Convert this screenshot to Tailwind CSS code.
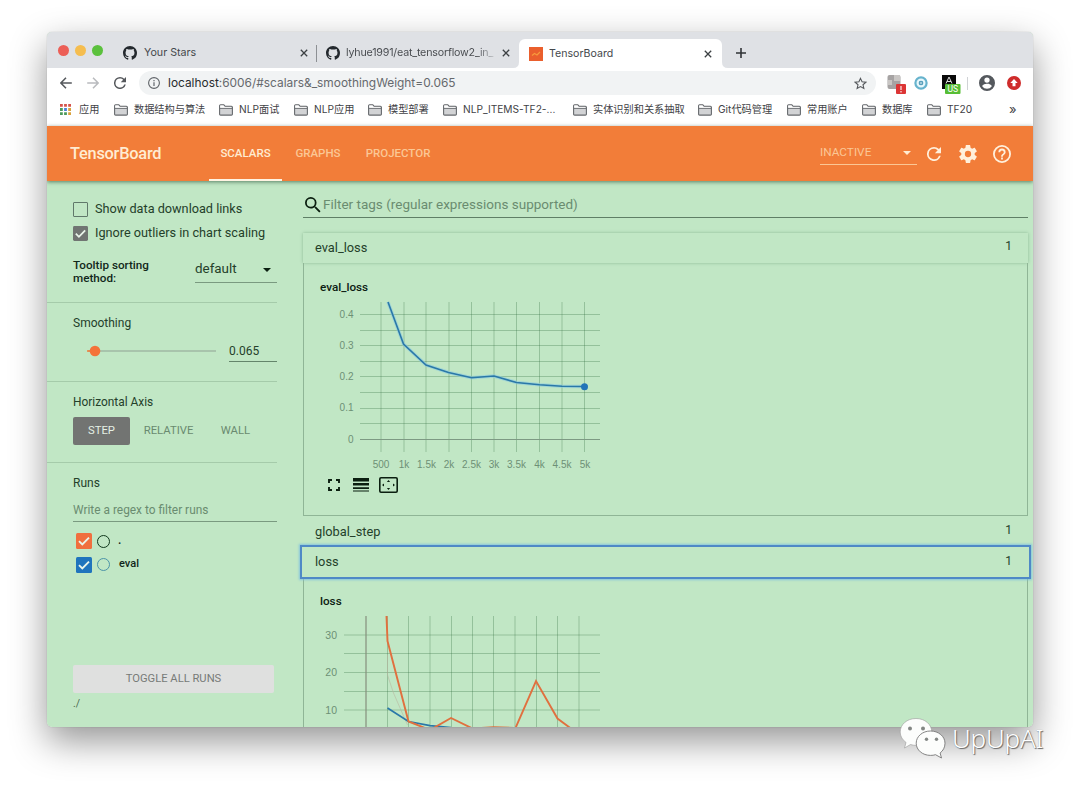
<!DOCTYPE html>
<html lang="zh">
<head>
    <meta charset="UTF-8">
    <meta name="viewport" content="width=device-width, initial-scale=1.0">
    <title>TensorBoard</title>
    <script src="https://cdn.jsdelivr.net/npm/@tailwindcss/browser@4"></script>
</head>
<body class="relative h-[790px] w-[1080px] overflow-hidden bg-white font-['Roboto','Noto_Sans_CJK_SC',sans-serif] text-[#24402a]">
    <!-- Shared icons -->
    <svg class="hidden">
        <symbol id="folder" viewBox="0 0 14 12">
            <path d="M.6 10.2V1.8q0-1 1-1h3.2l1.4 1.5h6.2q1 0 1 1v6.9q0 .9-1 .9H1.6q-1 0-1-.9z" fill="#d2d3d5" stroke="#65686c" stroke-width="1.1"/>
            <path d="M.8 4.3h12.4" stroke="#65686c" stroke-width="1"/>
            <path d="M1.2 1.5h3.3l1.2 1.5h6.8v.8H1.2z" fill="#fff"/>
        </symbol>
        <symbol id="github" viewBox="0 0 16 16">
            <path fill="#24292e" d="M8 0C3.58 0 0 3.58 0 8c0 3.54 2.29 6.53 5.47 7.59.4.07.55-.17.55-.38 0-.19-.01-.82-.01-1.49-2.01.37-2.53-.49-2.69-.94-.09-.23-.48-.94-.82-1.13-.28-.15-.68-.52-.01-.53.63-.01 1.08.58 1.23.82.72 1.21 1.87.87 2.33.66.07-.52.28-.87.51-1.07-1.78-.2-3.64-.89-3.64-3.95 0-.87.31-1.59.82-2.15-.08-.2-.36-1.02.08-2.12 0 0 .67-.21 2.2.82.64-.18 1.32-.27 2-.27s1.36.09 2 .27c1.53-1.04 2.2-.82 2.2-.82.44 1.1.16 1.92.08 2.12.51.56.82 1.27.82 2.15 0 3.07-1.87 3.75-3.65 3.95.29.25.54.73.54 1.48 0 1.07-.01 1.93-.01 2.2 0 .21.15.46.55.38A8.01 8.01 0 0 0 16 8c0-4.42-3.58-8-8-8z"/>
        </symbol>
        <symbol id="close" viewBox="0 0 8 8">
            <path d="M.8.8l6.4 6.4M7.2.8L.8 7.2" stroke="#3c4043" stroke-width="1.3" fill="none"/>
        </symbol>
        <symbol id="refresh" viewBox="4 4 16 16">
            <path d="M17.65 6.35A7.96 7.96 0 0 0 12 4a8 8 0 1 0 7.73 10h-2.08A6 6 0 1 1 12 6c1.66 0 3.14.69 4.22 1.78L13 11h7V4l-2.35 2.35z"/>
        </symbol>
        <symbol id="checked" viewBox="0 0 16 16">
            <rect width="16" height="16" rx="1.5"/>
            <path d="M3 8.2l3.3 3.3L13 4.6" fill="none" stroke="#e9f5ea" stroke-width="1.9"/>
        </symbol>
    </svg>

    <!-- Browser window -->
    <div class="mt-8 ml-[47px] flex h-[695px] w-[986px] flex-col rounded-[5px] shadow-[0_0_1px_rgba(0,0,0,0.35),0_14px_36px_rgba(0,0,0,0.42)]">
    <div class="flex min-h-0 flex-1 flex-col overflow-hidden rounded-[5px] bg-[#c1e7c5]">

        <!-- Tab strip -->
        <div class="flex h-9 shrink-0 items-end bg-[#dfe1e5] font-['Inter',sans-serif] text-[11px] text-[#45484c]">
            <div class="flex h-9 w-[76px] items-center gap-[6px] pl-[11px]">
                <span class="size-[11px] rounded-full bg-[#ec5f57]"></span>
                <span class="size-[11px] rounded-full bg-[#f5bd4f]"></span>
                <span class="size-[11px] rounded-full bg-[#5bc13d]"></span>
            </div>
            <div class="flex h-[30px] w-[193px] items-center">
                <svg class="size-[14px] shrink-0"><use href="#github"/></svg>
                <span class="ml-[7px] flex-1 text-[10.700px] whitespace-nowrap">Your Stars</span>
                <svg class="mr-[8px] size-2 shrink-0"><use href="#close"/></svg>
            </div>
            <div class="flex h-[30px] w-[203px] items-center">
                <span class="h-[17px] w-px bg-[#8d9094]"></span>
                <svg class="ml-[9px] size-[14px] shrink-0"><use href="#github"/></svg>
                <span class="ml-[6px] w-[148px] bg-linear-to-r from-[#45484c] from-88% to-[#45484c]/20 bg-clip-text text-[10.700px] tracking-[-0.200px] whitespace-nowrap text-transparent">lyhue1991/eat_tensorflow2_in_</span>
                <svg class="ml-[8px] size-2 shrink-0"><use href="#close"/></svg>
            </div>
            <div class="relative flex h-[29px] w-[203px] items-center rounded-t-[6px] bg-white pl-[10px]">
                <svg class="absolute bottom-0 -left-[6px] size-[6px]" viewBox="0 0 6 6"><path d="M6 0v6H0q6 0 6-6" fill="#fff"/></svg>
                <svg class="absolute -right-[6px] bottom-0 size-[6px]" viewBox="0 0 6 6"><path d="M0 0v6h6q-6 0-6-6" fill="#fff"/></svg>
                <svg class="size-[14px]" viewBox="0 0 14 14"><rect width="14" height="14" fill="#ea5f2d"/><path d="M3 8.500l2.500-2 2.500 1.500 3-3" stroke="#f89a3c" stroke-width="1.200" fill="none"/></svg>
                <span class="ml-[6px] flex-1 text-[10.600px]">TensorBoard</span>
                <svg class="mr-[10px] size-2"><use href="#close"/></svg>
            </div>
            <div class="flex h-[30px] items-center pl-[14px]">
                <svg class="size-[10px]" viewBox="0 0 10 10"><path d="M5 0v10M0 5h10" stroke="#303336" stroke-width="1.6"/></svg>
            </div>
        </div>

        <!-- Address bar -->
        <div class="flex h-[30px] shrink-0 items-center bg-white">
            <svg class="ml-[13px] size-3" viewBox="0 0 12 12" fill="none" stroke="#55585c" stroke-width="1.5"><path d="M11.8 6H1M6 .8L.9 6 6 11.2"/></svg>
            <svg class="ml-[15px] size-3" viewBox="0 0 12 12" fill="none" stroke="#b9bbbe" stroke-width="1.5"><path d="M.2 6H11M6 .8L11.1 6 6 11.2"/></svg>
            <svg class="ml-[15px] size-3 fill-[#55585c]"><use href="#refresh"/></svg>
            <div class="ml-[13px] flex h-6 w-[737px] items-center rounded-full bg-[#f1f3f4] font-['Inter',sans-serif] text-[11.900px] text-[#66696d]">
                <svg class="ml-[9px] size-3" viewBox="0 0 12 12" fill="none" stroke="#5f6368"><circle cx="6" cy="6" r="5.4" stroke-width="1.1"/><path d="M6 5.2v3.7M6 3v1.3" stroke-width="1.2"/></svg>
                <span class="ml-[8px] flex-1 whitespace-nowrap"><span class="text-[#292b2e]">localhost</span>:6006/#scalars&amp;_smoothingWeight=0.065</span>
                <svg class="mr-[9px] size-[13px]" viewBox="0 0 24 24" fill="none" stroke="#55585c" stroke-width="2"><path d="M12 2.5l2.9 6.4 7 .7-5.3 4.7 1.6 6.9L12 17.6l-6.2 3.6 1.6-6.9L2.1 9.6l7-.7z"/></svg>
            </div>
            <svg class="mt-[3px] ml-[11px] h-[19px] w-[20px]" viewBox="0 0 20 19">
                <rect x=".5" width="13" height="14" rx="2" fill="#a6a3a3"/><path d="M1 5h4v5H1zM7 0h6v6H7z" fill="#c9c6c4"/>
                <rect x="9" y="9" width="10" height="10" rx="1" fill="#dc3535"/><path d="M14 11v4M14 16v1.4" stroke="#fff" stroke-width="1.1"/>
            </svg>
            <svg class="ml-[7px] size-[14px]" viewBox="0 0 14 14"><circle cx="7" cy="7" r="5.6" fill="#e8f7fb" stroke="#67b3cd" stroke-width="2.2"/><circle cx="7" cy="7" r="2.3" fill="#3c8fb0"/><path d="M5.5 7h3M7 5.5v3" stroke="#fff" stroke-width=".6"/></svg>
            <svg class="mt-[3px] ml-[13px] h-[19px] w-[20px]" viewBox="0 0 20 19">
                <rect x="1" width="14" height="14" fill="#090909"/><path d="M5 8.5L8 2l3 6.500M6 6.500h4" stroke="#ddd" stroke-width="1" fill="none"/>
                <rect x="4" y="9" width="15.500" height="10" rx="1" fill="#57bd35"/><text x="11.700" y="17" font-size="8.500" text-anchor="middle" fill="#fff">US</text>
            </svg>
            <span class="ml-[6px] h-[13px] w-px bg-[#d0d2d5]"></span>
            <svg class="ml-[11px] size-4" viewBox="2 2 20 20" fill="#54585d"><path d="M12 2a10 10 0 1 0 0 20 10 10 0 0 0 0-20zm0 3a3.300 3.300 0 1 1 0 6.600A3.300 3.300 0 0 1 12 5zm0 14.200a7.200 7.200 0 0 1-6-3.220c.03-1.990 4-3.080 6-3.080s5.970 1.090 6 3.080a7.200 7.200 0 0 1-6 3.220z"/></svg>
            <svg class="ml-[12px] size-[14px]" viewBox="0 0 14 14"><circle cx="7" cy="7" r="7" fill="#cf2c2b"/><path d="M7 3L3.300 7h2.200v3.300h3V7h2.200z" fill="#fff"/></svg>
        </div>

        <!-- Bookmarks bar -->
        <div class="flex h-[28px] shrink-0 items-center bg-white pb-[4px] pl-[13px] font-['Inter','Noto_Sans_CJK_SC',sans-serif] text-[10.200px] whitespace-nowrap text-[#3f4246]">
            <div class="flex w-[54px] items-center">
                <svg class="mr-[8px] size-[11px]" viewBox="0 0 11 11">
                    <path d="M0 0h2.800v2.800H0zM4.100 0h2.800v2.800H4.100zM8.200 0H11v2.800H8.200z" fill="#d5544b"/>
                    <path d="M0 4.100h2.800v2.800H0z" fill="#4d9a5b"/><path d="M4.100 4.100h2.800v2.800H4.100z" fill="#4b83d6"/><path d="M8.200 4.100H11v2.800H8.200z" fill="#d8a13b"/>
                    <path d="M0 8.200h2.800V11H0zM4.100 8.200h2.800V11H4.100z" fill="#4d9a5b"/><path d="M8.200 8.200H11V11H8.200z" fill="#d8a13b"/>
                </svg>应用</div>
            <div class="flex w-[105px] items-center gap-[6px]"><svg class="h-3 w-[14px]"><use href="#folder"/></svg>数据结构与算法</div>
            <div class="flex w-[75px] items-center gap-[6px]"><svg class="h-3 w-[14px]"><use href="#folder"/></svg>NLP面试</div>
            <div class="flex w-[74px] items-center gap-[6px]"><svg class="h-3 w-[14px]"><use href="#folder"/></svg>NLP应用</div>
            <div class="flex w-[75px] items-center gap-[6px]"><svg class="h-3 w-[14px]"><use href="#folder"/></svg>模型部署</div>
            <div class="flex w-[130px] items-center gap-[6px]"><svg class="h-3 w-[14px]"><use href="#folder"/></svg>NLP_ITEMS-TF2-...</div>
            <div class="flex w-[125px] items-center gap-[6px]"><svg class="h-3 w-[14px]"><use href="#folder"/></svg>实体识别和关系抽取</div>
            <div class="flex w-[89px] items-center gap-[6px]"><svg class="h-3 w-[14px]"><use href="#folder"/></svg>Git代码管理</div>
            <div class="flex w-[75px] items-center gap-[6px]"><svg class="h-3 w-[14px]"><use href="#folder"/></svg>常用账户</div>
            <div class="flex w-[65px] items-center gap-[6px]"><svg class="h-3 w-[14px]"><use href="#folder"/></svg>数据库</div>
            <div class="flex w-[82px] items-center gap-[6px]"><svg class="h-3 w-[14px]"><use href="#folder"/></svg>TF20</div>
            <span class="text-[13px]">»</span>
        </div>

        <!-- TensorBoard header -->
        <header class="relative flex h-[55px] shrink-0 items-center bg-[#f27d39] text-[#ffecd2] shadow-[0_1px_4px_rgba(0,40,20,0.55)]">
            <h1 class="w-[162px] pt-[1px] pl-[23px] text-[16.400px] font-medium tracking-[-0.250px]">TensorBoard</h1>
            <nav class="flex h-full flex-1 text-[11.500px] font-medium">
                <a class="flex w-[73px] items-center justify-center border-b-2 border-[#fff3e2] pt-[3px]">SCALARS</a>
                <a class="flex w-[72px] items-center justify-center pt-[1px] text-[#fbc795]">GRAPHS</a>
                <a class="flex w-[88px] items-center justify-center pt-[1px] text-[#fbc795]">PROJECTOR</a>
            </nav>
            <div class="mr-[10px] flex h-[23px] w-[97px] items-center justify-between border-b border-[#fbc795] pr-[6px] text-[11.800px] text-[#fbc795]">
                INACTIVE
                <span class="border-x-4 border-t-4 border-x-transparent border-t-[#ffecd2]"></span>
            </div>
            <svg class="size-[14px] fill-[#fff0dc]"><use href="#refresh"/></svg>
            <svg class="ml-[18px] size-[18px]" viewBox="2 2 20 20" fill="#fff0dc"><path d="M19.430 12.980c.04-.32.07-.64.07-.98s-.03-.66-.07-.98l2.110-1.650c.19-.15.24-.42.12-.64l-2-3.460c-.12-.22-.39-.3-.61-.22l-2.490 1c-.52-.4-1.080-.73-1.690-.98l-.38-2.650A.488.488 0 0 0 14 2h-4c-.25 0-.46.18-.49.42l-.38 2.650c-.61.25-1.170.59-1.690.98l-2.490-1c-.23-.09-.49 0-.61.22l-2 3.460c-.13.22-.07.49.12.64l2.110 1.650c-.04.32-.07.65-.07.98s.03.66.07.98l-2.110 1.650c-.19.15-.24.42-.12.64l2 3.460c.12.22.39.3.61.22l2.490-1c.52.4 1.080.73 1.690.98l.38 2.650c.03.24.24.42.49.42h4c.25 0 .46-.18.49-.42l.38-2.650c.61-.25 1.170-.59 1.690-.98l2.490 1c.23.09.49 0 .61-.22l2-3.460c.12-.22.07-.49-.12-.64l-2.110-1.650zM12 15.500a3.500 3.500 0 1 1 0-7 3.500 3.500 0 0 1 0 7z"/></svg>
            <svg class="mr-[22px] ml-[16px] size-[18px]" viewBox="2 2 20 20" fill="#fff0dc"><path d="M11 18h2v-2h-2v2zm1-16a10 10 0 1 0 0 20 10 10 0 0 0 0-20zm0 18a8 8 0 1 1 0-16 8 8 0 0 1 0 16zm0-14a4 4 0 0 0-4 4h2a2 2 0 1 1 4 0c0 2-3 1.750-3 5h2c0-2.250 3-2.500 3-5a4 4 0 0 0-4-4z"/></svg>
        </header>

        <div class="flex min-h-0 flex-1">
            <!-- Sidebar -->
            <aside class="flex w-[230px] shrink-0 flex-col text-[12px]">
                <section class="h-[122px] border-b border-[#a5cbaa] pt-[16px] pl-[26px] text-[12.700px]">
                    <label class="flex h-6 items-center gap-[7px]"><span class="size-[15px] rounded-[1px] border-[1.500px] border-[#60786a]"></span>Show data download links</label>
                    <label class="flex h-6 items-center gap-[7px]"><svg class="size-[15px] fill-[#707572]"><use href="#checked"/></svg>Ignore outliers in chart scaling</label>
                    <div class="mt-[12px] flex justify-between">
                        <span class="w-[110px] pt-[2px] text-[11.700px] leading-[13px] font-medium text-[#11281a]">Tooltip sorting method:</span>
                        <div class="flex h-[26px] w-[82px] items-center justify-between border-b border-[#7a9a80] pr-[6px] text-[13.400px]">default
                            <span class="border-x-[4.500px] border-t-[4.500px] border-x-transparent border-t-[#0c2012]"></span>
                        </div>
                    </div>
                </section>
                <section class="h-[79px] border-b border-[#a5cbaa] pt-[11px] pl-[26px]">
                    <h3 class="leading-[18px]">Smoothing</h3>
                    <div class="mt-[7px] flex items-center justify-between pl-[13px]">
                        <svg class="h-3 w-[131px]" viewBox="0 0 131 12"><path d="M2 6h128" stroke="#9fb9a3" stroke-width="1.500"/><path d="M1 6h8" stroke="#f27d39" stroke-width="1.500"/><circle cx="9" cy="6" r="5.300" fill="#f4733a"/></svg>
                        <div class="flex h-[23px] w-[48px] items-center border-b border-[#64856b] pt-[1px]">0.065</div>
                    </div>
                </section>
                <section class="h-[81px] border-b border-[#a5cbaa] pt-[11px] pl-[26px]">
                    <h3 class="text-[11.900px] leading-[18px]">Horizontal Axis</h3>
                    <div class="mt-[6px] flex h-[28px] text-[11.300px] text-[#6a8a70]">
                        <button class="w-[57px] rounded-[2px] bg-[#727472] pt-[1px] text-[#e4f0e5]">STEP</button>
                        <button class="w-[77px] pt-[1px]">RELATIVE</button>
                        <button class="w-[57px] pt-[1px]">WALL</button>
                    </div>
                </section>
                <section class="flex flex-1 flex-col pt-[11px] pl-[26px]">
                    <h3 class="leading-[18px]">Runs</h3>
                    <div class="mt-[7px] mb-[7px] flex h-[23px] items-center border-b border-[#7a9a80] pt-[1px] text-[11.900px] text-[#6a8c70]">Write a regex to filter runs</div>
                    <div class="flex h-[24px] items-center pl-[3px] font-medium text-[#10261a]">
                        <svg class="size-4 fill-[#f06f3e]"><use href="#checked"/></svg>
                        <span class="mr-[8px] ml-[5px] size-[13px] rounded-full border-[1.800px] border-[#10381c]"></span><span class="pb-[3px]">.</span>
                    </div>
                    <div class="flex h-[23px] items-center pl-[3px] font-medium text-[#10261a]">
                        <svg class="size-4 fill-[#1f74bd]"><use href="#checked"/></svg>
                        <span class="mr-[9px] ml-[5px] size-[13px] rounded-full border-[1.500px] border-[#4c94a8]"></span><span class="pb-[1px] text-[11px]">eval</span>
                    </div>
                    <button class="mt-[89px] h-[28px] w-[201px] rounded-[2px] bg-[#dfe0df] text-[11.200px] text-[#777b78]">TOGGLE ALL RUNS</button>
                    <span class="mt-[3px] text-[10.500px] leading-[16px] text-[#4a6a50]">./</span>
                </section>
            </aside>

            <!-- Scalars dashboard -->
            <main class="ml-[26px] flex w-[725px] shrink-0 flex-col pt-[11px]">
                <div class="flex h-[26px] shrink-0 items-center border-b border-[#5f7f66] pl-[2px] text-[13.500px] text-[#6a8c70]">
                    <svg class="mr-[2px] size-[16px]" viewBox="3 3 18 18" fill="#0b1f10"><path d="M15.500 14h-.79l-.28-.27A6.471 6.471 0 0 0 16 9.500 6.500 6.500 0 1 0 9.500 16c1.610 0 3.090-.59 4.230-1.570l.27.28v.79l5 4.990L20.490 19l-4.990-5zm-6 0a4.500 4.500 0 1 1 0-9 4.500 4.500 0 0 1 0 9z"/></svg>
                    Filter tags (regular expressions supported)
                </div>

                <div class="mt-[15px] flex h-[30px] shrink-0 items-center justify-between pr-[16px] pl-[12px] text-[12.800px] shadow-[0_0_3px_rgba(40,100,60,0.35)]">
                    <span>eval_loss</span><span class="pb-[4px] text-[12px]">1</span>
                </div>
                <div class="h-[253px] shrink-0 border border-t-0 border-[#8fb596] pt-[15px] pl-[16px]">
                    <h4 class="h-[18px] text-[11.700px] leading-[18px] font-medium text-[#0c2012]">eval_loss</h4>
                    <svg class="h-[180px] w-[290px]" viewBox="320 296 290 180">
                        <path d="M381 302v150M404 302v150M426 302v150M449 302v150M471.500 302v150M494 302v150M516.500 302v150M539.500 302v150M562 302v150M584.500 302v150M360 314.500h240M360 330.500h240M360 345.500h240M360 361.500h240M360 376.500h240M360 392.500h240M360 408.500h240M360 423.500h240" stroke="#2d6a3d" stroke-opacity=".38" stroke-width=".8"/>
                        <path d="M360 439.500h240" stroke="#7d9a83" stroke-width="1.200"/>
                        <path d="M388 302l15.500 42 22.500 21 22.500 7.500 23 5.300 22.500-1.800 22.500 6.500 23 2.300 22.500 1.400 22.500.3" fill="none" stroke="#8ccbe0" stroke-opacity=".6" stroke-width="3.500"/>
                        <path d="M388 302l15.500 42 22.500 21 22.500 7.500 23 5.300 22.500-1.800 22.500 6.500 23 2.300 22.500 1.400 22.500.3" fill="none" stroke="#2a78a8" stroke-width="1.600"/>
                        <circle cx="584.500" cy="386.700" r="3.500" fill="#2274b8"/>
                        <g font-family="Liberation Sans, sans-serif" font-size="10" fill="#6d9075">
                            <g text-anchor="end"><text x="353.500" y="317.500">0.4</text><text x="353.500" y="348.500">0.3</text><text x="353.500" y="379.500">0.2</text><text x="353.500" y="411">0.1</text><text x="353.500" y="442.500">0</text></g>
                            <g text-anchor="middle"><text x="381" y="468">500</text><text x="404" y="468">1k</text><text x="426.500" y="468">1.5k</text><text x="449" y="468">2k</text><text x="471.500" y="468">2.5k</text><text x="494" y="468">3k</text><text x="516.500" y="468">3.5k</text><text x="539.500" y="468">4k</text><text x="562" y="468">4.5k</text><text x="585" y="468">5k</text></g>
                        </g>
                    </svg>
                    <!-- Chart buttons -->
                    <div class="ml-[8px] flex h-[17px] items-center gap-[13px]">
                        <svg class="size-3" viewBox="0 0 12 12" fill="none" stroke="#0b1f10" stroke-width="1.900"><path d="M1 4V1h3M8 1h3v3M11 8v3H8M4 11H1V8"/></svg>
                        <svg class="h-[14px] w-4" viewBox="0 0 16 14" fill="#0b1f10"><path d="M0 0h16v3.500H0zM0 5h16v2.600H0zM0 9.200h16v1.800H0zM0 12.500h16v1H0z"/></svg>
                        <svg class="-ml-[3px] h-4 w-[19px]" viewBox="0 0 19 16" fill="none" stroke="#0b1f10"><rect x=".8" y=".8" width="17.400" height="14.400" rx="1.200" stroke-width="1.600"/><path d="M9.500 3l1.600 2H7.900zM9.500 13l1.600-2H7.900zM3 8l2-1.600v3.200zM16 8l-2-1.600v3.200z" fill="#0b1f10" stroke="none"/></svg>
                    </div>
                </div>

                <div class="mt-[1px] flex h-[30px] shrink-0 items-center justify-between pr-[16px] pl-[12px] text-[12.800px]">
                    <span>global_step</span><span class="pb-[4px] text-[12px]">1</span>
                </div>
                <div class="relative -mx-[3px] -mt-[2px] flex h-[34px] shrink-0 items-center justify-between border-2 border-[#4f89c6] pr-[17px] pl-[13px] text-[12.800px] shadow-[0_0_2px_1px_rgba(120,190,225,0.8)]">
                    <span>loss</span><span class="pb-[3px] text-[12px]">1</span>
                </div>
                <div class="h-[200px] shrink-0 border-x border-[#8fb596] pt-[13px] pl-[16px]">
                    <h4 class="h-[18px] text-[11.700px] leading-[18px] font-medium text-[#0c2012]">loss</h4>
                    <svg class="h-[130px] w-[290px]" viewBox="320 610 290 130">
                        <path d="M387.500 616v130M408.500 616v130M430 616v130M451.500 616v130M472.500 616v130M493.500 616v130M515 616v130M536.500 616v130M557.500 616v130M579 616v130M344 635h256M344 653.500h256M344 672.500h256M344 691.500h256M344 710h256" stroke="#2d6a3d" stroke-opacity=".38" stroke-width=".8"/>
                        <path d="M366 616v130" stroke="#858f7c" stroke-width="1.200"/>
                        <path d="M387.500 655v20l6 18 14 32" fill="none" stroke="#b9b7a0" stroke-opacity=".6"/>
                        <path d="M387.500 708l21 13.500 21.500 4.200 21 1.800 21 1" fill="none" stroke="#2a78a8" stroke-width="1.700"/>
                        <path d="M386.500 616l1 25 21 80.500 21.500 8.500 21-12 21.500 10.500 21-1.300 22 .8 20.500-47 21.500 37.500 21.500 16" fill="none" stroke="#e0703f" stroke-width="1.900"/>
                        <g font-family="Liberation Sans, sans-serif" font-size="10.500" fill="#6d9075" text-anchor="end"><text x="337" y="638.500">30</text><text x="337" y="676">20</text><text x="337" y="713.500">10</text></g>
                    </svg>
                </div>
            </main>
        </div>
    </div>
    </div>

    <!-- Account mark -->
    <div class="absolute top-[717px] left-[899px] flex items-center">
        <svg class="h-[43px] w-[48px]" viewBox="0 0 48 43">
            <path d="M17 1.500C8 1.500 1.200 7.500 1.200 15c0 4.200 2.300 8 5.800 10.400L5.500 31l6-3.500c2 .6 3.500.9 5.500.9 9 0 15.800-5.900 15.800-13.400S26 1.500 17 1.500z" fill="#fcfdfc" stroke="#999" stroke-width=".6"/>
            <path d="M31.500 14c-8 0-14.300 5.400-14.300 12.200S23.500 38.400 31.500 38.400c1.800 0 3.500-.2 5-.7l6 3.300-1.400-5c3-2.300 4.900-5.600 4.900-9.800C46 19.400 39.500 14 31.500 14z" fill="#fcfdfc" stroke="#777" stroke-width=".9"/>
            <g fill="#838784"><circle cx="11" cy="11.500" r="2"/><circle cx="24" cy="11.500" r="2"/><circle cx="27.500" cy="22.300" r="1.700"/><circle cx="37.500" cy="22.300" r="1.700"/></g>
        </svg>
        <span class="ml-[5px] font-['Noto_Sans',sans-serif] text-[26px] leading-[43px] font-light tracking-[-0.200px] text-white [text-shadow:1px_1px_1px_#666,0_0_1px_#999]">UpUpAI</span>
    </div>
</body>
</html>
